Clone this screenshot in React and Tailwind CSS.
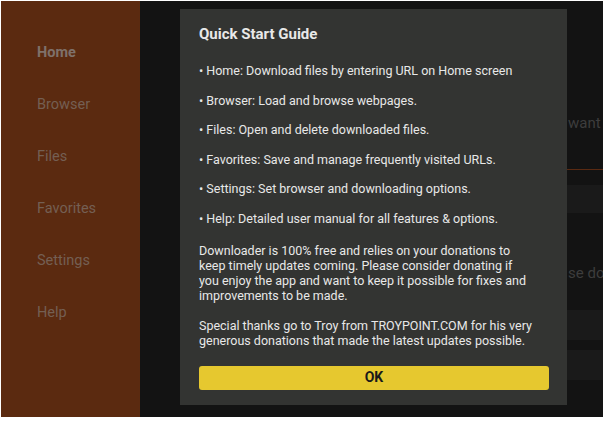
export default function App() {
  const nav = ["Home", "Browser", "Files", "Favorites", "Settings", "Help"];
  const bullets = [
    "Home: Download files by entering URL on Home screen",
    "Browser: Load and browse webpages.",
    "Files: Open and delete downloaded files.",
    "Favorites: Save and manage frequently visited URLs.",
    "Settings: Set browser and downloading options.",
    "Help: Detailed user manual for all features & options.",
  ];

  return (
    <div
      className="w-[603px] h-[423px] bg-white pt-[1px] pl-[1px] pb-[6px]"
      style={{ fontFamily: "Roboto, 'Liberation Sans', sans-serif" }}
    >
      <div className="relative flex h-[416px] overflow-hidden bg-[#121212]">
        {/* sidebar */}
        <div className="w-[139px] shrink-0 bg-[#5b2a10] pl-[36px] pt-[42px] flex flex-col gap-[32px]">
          {nav.map((n, i) => (
            <div
              key={n}
              className={
                "text-[14.5px] leading-[20px] " +
                (i === 0 ? "font-bold text-[#7f716a]" : "text-[#745f53]")
              }
            >
              {n}
            </div>
          ))}
        </div>

        {/* main (dimmed, behind dialog) */}
        <div className="flex-1 flex flex-col bg-[#131313]">
          <div className="h-[112px]" />
          <div className="pl-[428px] text-[15px] leading-[20px] text-[#3d3d3d] whitespace-nowrap">
            want to
          </div>
          <div className="h-[36px]" />
          <div className="ml-[300px] h-[1px] bg-[#5a2a12]" />
          <div className="h-[15px]" />
          <div className="ml-[300px] h-[28px] bg-[#1a1a1a]" />
          <div className="h-[50px]" />
          <div className="pl-[428px] text-[15px] leading-[20px] text-[#3d3d3d] whitespace-nowrap">
            se do
          </div>
          <div className="h-[27px]" />
          <div className="ml-[300px] h-[30px] bg-[#1a1a1a]" />
          <div className="h-[10px]" />
          <div className="ml-[300px] h-[30px] bg-[#1a1a1a]" />
        </div>

        {/* dialog */}
        <div className="absolute left-[179px] top-[8px] w-[387px] h-[396px] bg-[#333432] pl-[19px] pr-[18px] pt-[15px] text-[#e8e8e8]">
          <div className="text-[15px] leading-[20px] font-bold">Quick Start Guide</div>
          <div className="mt-[19px] flex flex-col gap-[14.5px] text-[12.5px] leading-[15px]">
            {bullets.map((b) => (
              <div key={b} className="whitespace-nowrap">
                {"\u2022 "}
                {b}
              </div>
            ))}
          </div>
          <p className="mt-[17px] text-[12.5px] leading-[15px] whitespace-nowrap">
            Downloader is 100% free and relies on your donations to
            <br />
            keep timely updates coming. Please consider donating if
            <br />
            you enjoy the app and want to keep it possible for fixes and
            <br />
            improvements to be made.
          </p>
          <p className="mt-[15px] text-[12.5px] leading-[15px] whitespace-nowrap">
            Special thanks go to Troy from TROYPOINT.COM for his very
            <br />
            generous donations that made the latest updates possible.
          </p>
          <button className="mt-[18px] w-full h-[24px] rounded-[3px] bg-[#e6c82f] text-[#1a1a1a] text-[14px] font-bold">
            OK
          </button>
        </div>
      </div>
    </div>
  );
}
